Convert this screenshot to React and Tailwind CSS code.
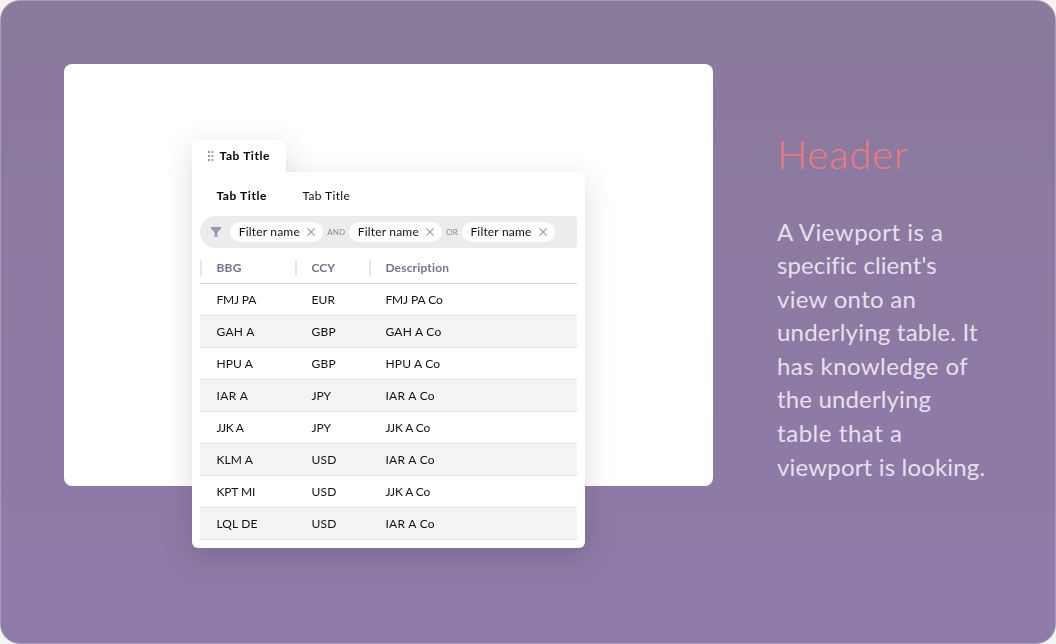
import React from "react";

const rows = [
  [["FMJ PA", "tracking-[-0.15px]"], ["EUR", "tracking-[0.2px]"], ["FMJ PA Co", "tracking-[-0.1px]"]],
  [["GAH A", "tracking-[0.3px]"], ["GBP", "tracking-[0.3px]"], ["GAH A Co", "tracking-[0.25px]"]],
  [["HPU A", "tracking-[0.15px]"], ["GBP", "tracking-[0.3px]"], ["HPU A Co", "tracking-[0.2px]"]],
  [["IAR A", "tracking-[0.4px]"], ["JPY", ""], ["IAR A Co", "tracking-[0.3px]"]],
  [["JJK A", "tracking-[-0.3px]"], ["JPY", ""], ["JJK A Co", "tracking-[-0.15px]"]],
  [["KLM A", "tracking-[0.1px]"], ["USD", "tracking-[0.2px]"], ["IAR A Co", "tracking-[0.3px]"]],
  [["KPT MI", "tracking-[-0.1px]"], ["USD", "tracking-[0.2px]"], ["JJK A Co", "tracking-[-0.15px]"]],
  [["LQL DE", "tracking-[0.15px]"], ["USD", "tracking-[0.2px]"], ["IAR A Co", "tracking-[0.3px]"]],
];

const headers = [
  ["BBG", "tracking-[0.3px]"],
  ["CCY", "tracking-[0.1px]"],
  ["Description", "tracking-[0.17px]"],
];

const lines = [
  ["A Viewport is a", "tracking-[0.5px]"],
  ["specific client's", "tracking-[0.1px]"],
  ["view onto an", "tracking-[0.3px]"],
  ["underlying table. It", "tracking-[0.22px]"],
  ["has knowledge of", "tracking-[0.42px]"],
  ["the underlying", "tracking-[0.15px]"],
  ["table that a", "tracking-[0.55px]"],
  ["viewport is looking.", "tracking-[0.18px]"],
];

function Grip() {
  return (
    <svg width="6" height="10" viewBox="0 0 6 10" fill="#9299b8">
      {[0, 4, 8].map((y) => (
        <React.Fragment key={y}>
          <rect x="0" y={y} width="2" height="2" />
          <rect x="3.4" y={y} width="2" height="2" />
        </React.Fragment>
      ))}
    </svg>
  );
}

function Funnel() {
  return (
    <svg className="mr-[9px] shrink-0" width="10" height="10" viewBox="0 0 10 10" fill="#9299b8">
      <path d="M0 0H10V1.6L6.4 5.6V10H3.6V5.6L0 1.6Z" />
    </svg>
  );
}

function Chip() {
  return (
    <div className="flex h-5 w-[93px] shrink-0 items-center justify-between rounded-full bg-white pr-2 pl-[8.5px]">
      <span className="tracking-[0.18px]">Filter name</span>
      <svg width="8" height="8" viewBox="0 0 8 8" stroke="#9299b8" strokeWidth="1.1">
        <path d="M0.4 0.4 7.6 7.6M7.6 0.4 0.4 7.6" />
      </svg>
    </div>
  );
}

function FilterBar() {
  return (
    <div className="flex h-8 items-center rounded-l-2xl rounded-r bg-[#ececec] pl-[10.9px]">
      <Funnel />
      <Chip />
      <span className="w-[26px] text-center text-[8px] tracking-[0.1px] text-[#85889c]">AND</span>
      <Chip />
      <span className="w-[19.6px] text-center text-[8px] tracking-[0.1px] text-[#85889c]">OR</span>
      <Chip />
    </div>
  );
}

function Table() {
  return (
    <>
      <div className="mt-1 grid h-8 grid-cols-[95px_74px_1fr] items-center border-b border-[#d3d3d5] font-bold text-[#70758f]">
        {headers.map(([label, tracking]) => (
          <div key={label} className="flex h-4 items-center border-l-2 border-[#e6e6e8] pl-[14px]">
            <span className={tracking}>{label}</span>
          </div>
        ))}
      </div>
      <div>
        {rows.map((row, i) => (
          <div key={i} className="grid h-8 grid-cols-[95px_74px_1fr] items-center border-b border-[#e6e6e6] even:bg-[#f4f4f4]">
            {row.map(([text, tracking], j) => (
              <span key={j} className={`pl-4 ${tracking}`}>{text}</span>
            ))}
          </div>
        ))}
      </div>
    </>
  );
}

export default function App() {
  return (
    <div className="h-[644px] w-[1056px] bg-[#f4f4f4] font-['Lato',sans-serif]">
      <main className="flex h-full rounded-[20px] border border-[#a79bb5] bg-linear-to-b from-[#8a7a9b] to-[#907aab] pt-[63px] pl-[63px]">
        <section className="h-[422px] w-[649px] shrink-0 rounded-lg bg-white pt-[76px] pl-[128.4px]">
          <div className="w-[392.2px] text-xs text-[#111] drop-shadow-[0_8px_14px_rgba(0,0,0,0.14)]">
            <div className="flex h-8 w-[93.2px] items-center gap-[5.5px] rounded-t-md bg-white pl-[15.6px] font-bold text-black">
              <Grip />
              <span className="tracking-[0.58px]">Tab Title</span>
            </div>
            <div className="h-[376px] rounded-md rounded-tl-none bg-white px-2">
              <div className="flex h-11 items-center gap-[35.5px] pt-1 pl-4">
                <span className="font-bold tracking-[0.58px] text-black">Tab Title</span>
                <span className="tracking-[0.35px]">Tab Title</span>
              </div>
              <FilterBar />
              <Table />
            </div>
          </div>
        </section>
        <aside className="ml-16 pt-[65px]">
          <h1 className="text-[40px] leading-[50px] font-light tracking-[0.8px] text-[#f4777f]">Header</h1>
          <p className="mt-[35.5px] text-2xl leading-[33.6px] text-[#e6e0eb]">
            {lines.map(([text, tracking]) => (
              <span key={text} className={`block ${tracking}`}>{text}</span>
            ))}
          </p>
        </aside>
      </main>
    </div>
  );
}
